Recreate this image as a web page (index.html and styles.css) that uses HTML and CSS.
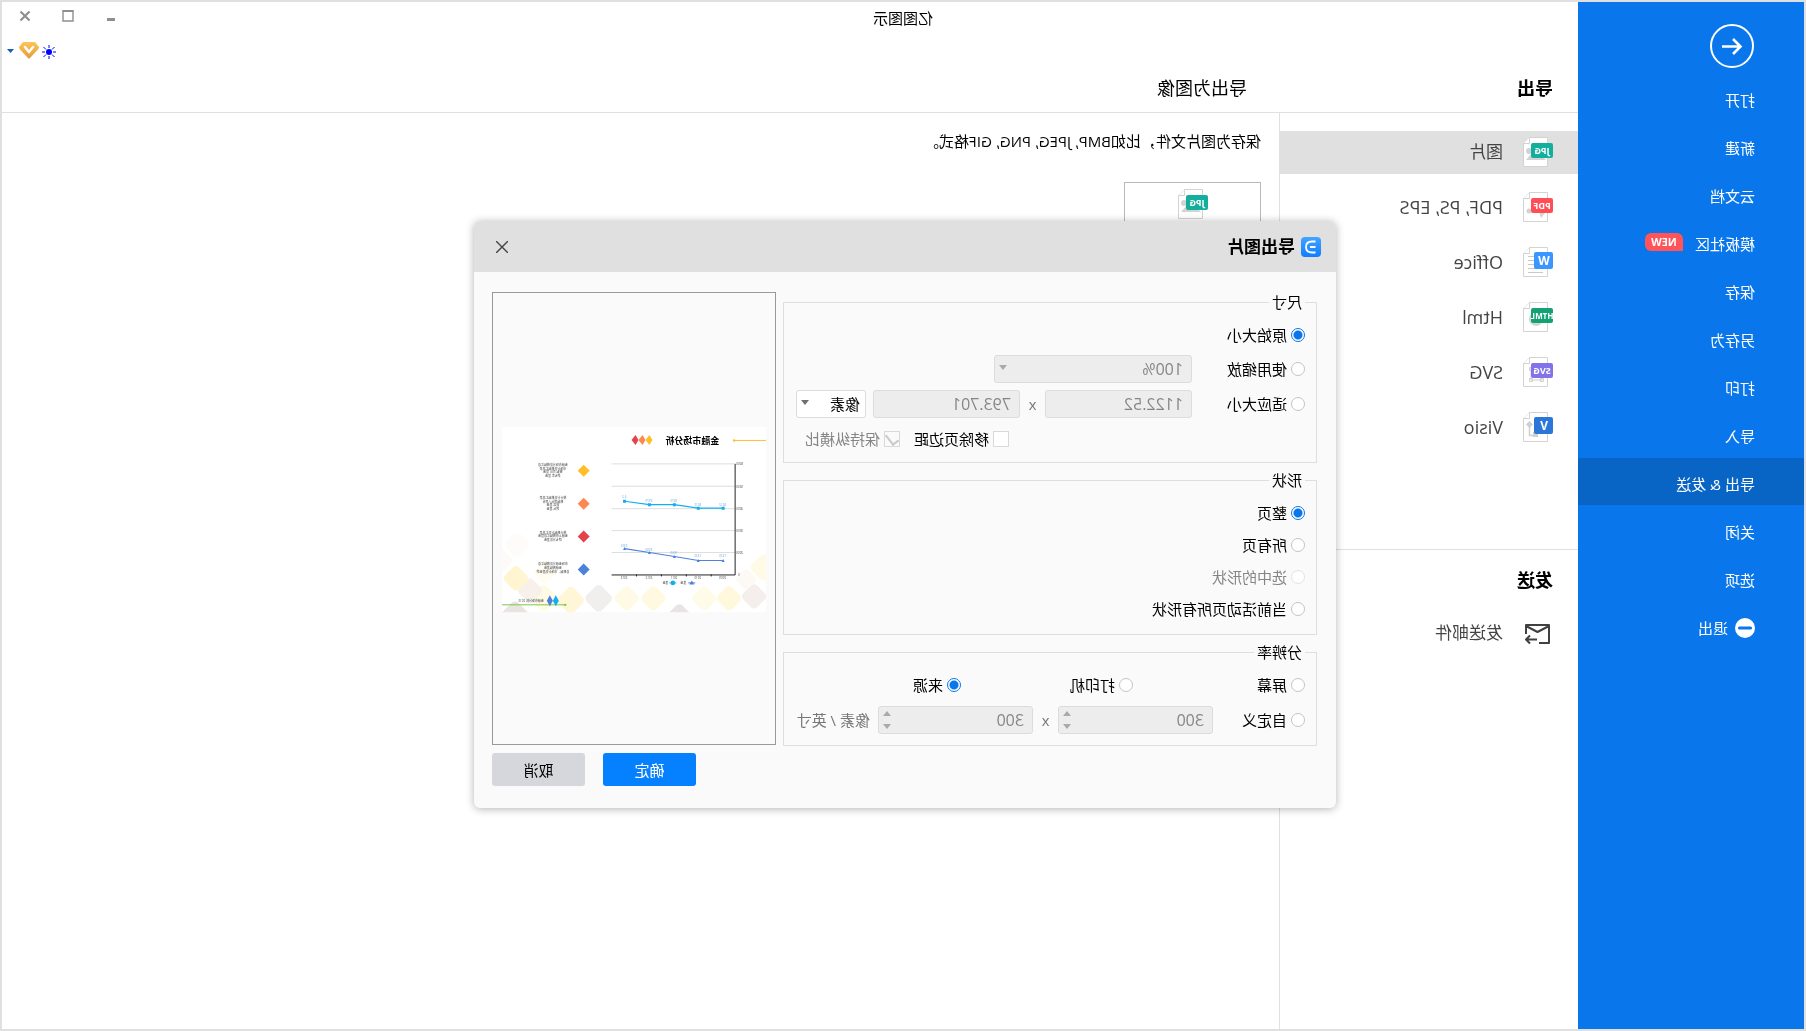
FILE: index.html
```html
<!DOCTYPE html>
<html lang="zh-CN">
<head>
<meta charset="utf-8">
<title>亿图图示</title>
<link rel="stylesheet" href="styles.css">
</head>
<body>
<svg class="defs" width="0" height="0" aria-hidden="true">
  <symbol id="page" viewBox="0 0 30 30"><path d="M5.500 0.500H23.500L29.500 6.500V29.500H5.500Z" fill="#fff" stroke="#d3d3d3"/><path d="M23.500 0.500V6.500H29.500" fill="#fff" stroke="#d3d3d3"/></symbol>
</svg>
<div class="window">
  <nav class="sidebar">
    <button class="back" aria-label="返回"><svg width="44" height="44" viewBox="0 0 44 44" fill="none" stroke="#fff"><circle cx="22" cy="22" r="21" stroke-width="2"/><path d="M32 22.500H14M21 15L13.500 22.500L21 30" stroke-width="2.600"/></svg></button>
    <ul class="menu">
      <li><a href="#">打开</a></li>
      <li><a href="#">新建</a></li>
      <li><a href="#">云文档</a></li>
      <li><a href="#">模板社区<span class="new">NEW</span></a></li>
      <li><a href="#">保存</a></li>
      <li><a href="#">另存为</a></li>
      <li><a href="#">打印</a></li>
      <li><a href="#">导入</a></li>
      <li><a href="#" class="active">导出 &amp; 发送</a></li>
      <li><a href="#">关闭</a></li>
      <li><a href="#">选项</a></li>
      <li><a href="#" class="exit"><svg width="20" height="20" viewBox="0 0 20 20"><circle cx="10" cy="10" r="10" fill="#fff"/><path d="M4.500 10H15.500" stroke="#0977eb" stroke-width="3.200" stroke-linecap="round"/></svg>退出</a></li>
    </ul>
  </nav>
  <div class="main">
    <header class="top">
      <div class="titlebar">
        <h1>亿图图示</h1>
        <div class="controls">
          <button aria-label="最小化"><svg width="12" height="12" viewBox="0 0 12 12"><path d="M2 9.500H10" stroke="#8f8f8f" stroke-width="3"/></svg></button>
          <button aria-label="最大化"><svg width="12" height="12" viewBox="0 0 12 12"><path d="M1 1H11V11H1Z" fill="none" stroke="#8f8f8f" stroke-width="1.400"/><path d="M0.500 1H11.500" stroke="#8f8f8f" stroke-width="2"/></svg></button>
          <button aria-label="关闭窗口"><svg width="12" height="12" viewBox="0 0 12 12"><path d="M1.500 1.500L10.500 10.500M10.500 1.500L1.500 10.500" stroke="#8f8f8f" stroke-width="2.200"/></svg></button>
        </div>
      </div>
      <div class="account">
        <svg class="sun" width="14" height="14" viewBox="0 0 14 14"><circle cx="7" cy="7" r="3" fill="#00f"/><path d="M7 0V3M7 11V14M0 7H3M11 7H14M1.500 2L4 4.500M10 9.500L12.500 12M1.500 12L4 9.500M10 4.500L12.500 2" stroke="#00f"/></svg>
        <svg width="20" height="17" viewBox="0 0 20 17"><defs><linearGradient id="gold" x2="0" y2="1"><stop stop-color="#ffc456"/><stop offset="1" stop-color="#e59b3c"/></linearGradient></defs><path d="M4 0H16L20 5Q20 6 19 7.500L11 16Q10 17 9 16L1 7.500Q0 6 0 5Z" fill="url(#gold)"/><path d="M6 5L10 10L14 5" fill="none" stroke="#fff" stroke-width="2.500" stroke-linecap="round" stroke-linejoin="round"/></svg>
        <svg class="caret" width="7" height="4" viewBox="0 0 7 4"><path d="M0 0H7L3.500 4Z" fill="#155fb8"/></svg>
      </div>
      <div class="headings"><h2>导出</h2><h3>导出为图像</h3></div>
    </header>
    <div class="columns">
      <aside class="panel">
        <ul class="formats">
          <li><a href="#" class="selected"><svg width="30" height="30" viewBox="0 0 30 30"><use href="#page"/><path d="M7 23L14 16L18 20L21 16L27 23Z" fill="#d3d3d3"/><circle cx="24" cy="14" r="3" fill="#d3d3d3"/><rect y="6" width="22" height="15" rx="2" fill="#14ae9d"/><text class="tag" x="11" y="17">JPG</text></svg>图片</a></li>
          <li><a href="#" class="latin"><svg width="30" height="30" viewBox="0 0 30 30"><use href="#page"/><circle cx="24" cy="19" r="2.500" fill="#d3d3d3"/><path d="M8 21L14 20L12 26Z" fill="#d3d3d3"/><rect y="6" width="22" height="15" rx="2" fill="#ff4e55"/><text class="tag" x="11" y="17">PDF</text></svg>PDF, PS, EPS</a></li>
          <li><a href="#" class="latin"><svg width="30" height="30" viewBox="0 0 30 30"><use href="#page"/><path d="M10 9.500H25M10 13.500H25M10 17.500H25M10 21.500H25M10 25.500H25" stroke="#c9c9c9"/><rect y="5" width="19" height="17" rx="2" fill="#3b97ff"/><text class="tag letter" x="9" y="18">W</text></svg>Office</a></li>
          <li><a href="#" class="latin"><svg width="30" height="30" viewBox="0 0 30 30"><use href="#page"/><circle cx="17" cy="17" r="7" fill="#d3d3d3"/><rect y="6" width="22" height="15" rx="2" fill="#13a273"/><text class="tag long" x="11" y="17">HTML</text></svg>Html</a></li>
          <li><a href="#" class="latin"><svg width="30" height="30" viewBox="0 0 30 30"><use href="#page"/><path d="M11 11H22V23H11Z M9.500 21.500h3v3h-3Z M20.500 21.500h3v3h-3Z M20.500 10.500h3v3h-3Z" fill="#fff" stroke="#d0d0d0"/><rect y="6" width="22" height="15" rx="2" fill="#8273e8"/><text class="tag" x="11" y="17">SVG</text></svg>SVG</a></li>
          <li><a href="#" class="latin"><svg width="30" height="30" viewBox="0 0 30 30"><use href="#page"/><path d="M23.500 9L27 12.500L23.500 16L20 12.500Z M15 20H20V25H15Z" fill="#d0d0d0"/><path d="M23.500 15V23.500H19" fill="none" stroke="#d0d0d0" stroke-width="1.500"/><rect y="5" width="19" height="17" rx="2" fill="#2b76d9"/><text class="tag letter" x="9" y="18">V</text></svg>Visio</a></li>
        </ul>
        <section class="send">
          <h2>发送</h2>
          <a href="#"><svg width="30" height="24" viewBox="0 0 30 24" fill="none" stroke="#404040" stroke-width="2"><path d="M14 22H4V4H27V13M4 5L15.500 11L27 5M16 18.500H27M23 14.500L27 18.500L23 22.500" stroke-linejoin="round"/></svg>发送邮件</a>
        </section>
      </aside>
      <main class="content">
        <p>保存为图片文件，比如BMP, JPEG, PNG, GIF格式。</p>
        <button class="card" aria-label="图片"><svg width="30" height="30" viewBox="0 0 30 30"><use href="#page"/><path d="M7 23L14 16L18 20L21 16L27 23Z" fill="#d3d3d3"/><circle cx="24" cy="14" r="3" fill="#d3d3d3"/><rect y="6" width="22" height="15" rx="2" fill="#14ae9d"/><text class="tag" x="11" y="17">JPG</text></svg></button>
      </main>
    </div>
  </div>

  <div class="overlay">
    <div class="dialog" role="dialog" aria-labelledby="dlg-title">
      <header class="dlg-head">
        <svg width="20" height="20" viewBox="0 0 20 20"><defs><linearGradient id="blue" x2="0" y2="1"><stop stop-color="#42a5ff"/><stop offset="1" stop-color="#117cff"/></linearGradient></defs><rect width="20" height="20" rx="4" fill="url(#blue)"/><path d="M5.500 4.500H9Q15 4.500 15 10T9 15.500H5.500M5.500 10H11" fill="none" stroke="#fff" stroke-width="1.800"/></svg>
        <h2 id="dlg-title">导出图片</h2>
        <button class="close" aria-label="关闭"><svg width="12" height="12" viewBox="0 0 12 12"><path d="M0 0L12 12M12 0L0 12" stroke="#444" stroke-width="1.400"/></svg></button>
      </header>
      <form class="dlg-body">
        <div class="options">
          <fieldset class="size">
            <legend>尺寸</legend>
            <div class="row"><label class="opt"><input type="radio" name="size" checked>原始大小</label></div>
            <div class="row fields"><label class="opt lead"><input type="radio" name="size">使用缩放</label>
              <span class="pick off zoom"><select disabled aria-label="缩放"><option>100%</option></select></span></div>
            <div class="row fields tall"><label class="opt lead"><input type="radio" name="size">适应大小</label>
              <input class="num" type="text" value="1122.52" disabled aria-label="宽"><span class="by">x</span><input class="num" type="text" value="793.701" disabled aria-label="高">
              <span class="pick unit"><select aria-label="单位"><option>像素</option></select></span></div>
            <div class="row checks"><label class="opt"><input type="checkbox">移除页边距</label><label class="opt off"><input type="checkbox" checked disabled>保持纵横比</label></div>
          </fieldset>
          <fieldset class="shape">
            <legend>形状</legend>
            <label class="opt"><input type="radio" name="shape" checked>整页</label>
            <label class="opt"><input type="radio" name="shape">所有页</label>
            <label class="opt off"><input type="radio" name="shape" disabled>选中的形状</label>
            <label class="opt"><input type="radio" name="shape">当前活动页所有形状</label>
          </fieldset>
          <fieldset class="dpi">
            <legend>分辨率</legend>
            <div class="row thirds"><label class="opt"><input type="radio" name="dpi">屏幕</label><label class="opt"><input type="radio" name="dpi">打印机</label><label class="opt"><input type="radio" name="dpi" checked>来源</label></div>
            <div class="row fields"><label class="opt custom"><input type="radio" name="dpi">自定义</label>
              <span class="spin"><input class="num" type="text" value="300" disabled aria-label="水平分辨率"></span><span class="by">x</span><span class="spin"><input class="num" type="text" value="300" disabled aria-label="垂直分辨率"></span><span class="units">像素 / 英寸</span></div>
          </fieldset>
        </div>
        <div class="side">
          <div class="preview">
            <svg viewBox="0 0 265 186" role="img" aria-label="预览">
              <defs><clipPath id="sheet"><path d="M0 0H265V186H0Z"/></clipPath></defs>
              <path d="M0 0H265V186H0Z" fill="#fff"/>
              <g clip-path="url(#sheet)" class="tiles">
                <rect x="-9" y="-9" width="18" height="18" rx="4" transform="translate(12 170) rotate(45) scale(1.100)" fill="#f4efec"/>
                <rect x="-9" y="-9" width="18" height="18" rx="4" transform="translate(37 172) rotate(45) scale(1.100)" fill="#fff8dc"/>
                <rect x="-9" y="-9" width="18" height="18" rx="4" transform="translate(62 172) rotate(45) scale(1.100)" fill="#fffbe9"/>
                <rect x="-9" y="-9" width="18" height="18" rx="4" transform="translate(87 190) rotate(45) scale(1.100)" fill="#e9e4e4"/>
                <rect x="-9" y="-9" width="18" height="18" rx="4" transform="translate(113 172) rotate(45) scale(1.100)" fill="#fff9e2"/>
                <rect x="-9" y="-9" width="18" height="18" rx="4" transform="translate(140 172) rotate(45) scale(1.100)" fill="#fffae6"/>
                <rect x="-9" y="-9" width="18" height="18" rx="4" transform="translate(168 172) rotate(45) scale(1.200)" fill="#f1eeee"/>
                <rect x="-9" y="-9" width="18" height="18" rx="4" transform="translate(196 174) rotate(45) scale(1.200)" fill="#fff6d8"/>
                <rect x="-9" y="-9" width="18" height="18" rx="4" transform="translate(223 172) rotate(45) scale(1.200)" fill="#fffae6"/>
                <rect x="-9" y="-9" width="18" height="18" rx="4" transform="translate(252 189) rotate(45) scale(1.250)" fill="#e9e3e1"/>
                <rect x="-9" y="-9" width="18" height="18" rx="4" transform="translate(237 164) rotate(45) scale(1.100)" fill="#f8f1eb"/>
                <rect x="-9" y="-9" width="18" height="18" rx="4" transform="translate(251 152) rotate(45) scale(1.100)" fill="#fff5d0"/>
                <rect x="-9" y="-9" width="18" height="18" rx="4" transform="translate(222 146) rotate(45)" fill="#fffcf2"/>
                <rect x="-9" y="-9" width="18" height="18" rx="4" transform="translate(250 118) rotate(45) scale(1.100)" fill="#fefcfa"/>
                <rect x="-9" y="-9" width="18" height="18" rx="4" transform="translate(267 134) rotate(45) scale(1.100)" fill="#fdfaf7"/>
                <rect x="-9" y="-9" width="18" height="18" rx="4" transform="translate(2 141) rotate(45) scale(1.200)" fill="#fffae6"/>
                <rect x="-9" y="-9" width="18" height="18" rx="4" transform="translate(20 153) rotate(45) scale(.9)" fill="#fdfaf5"/>
              </g>
              <path d="M0 13.500H32" stroke="#ffc02e"/><circle cx="32" cy="13.500" r="1.200" fill="#ffc02e"/>
              <text class="slide-title" x="47" y="17">金融市场分析</text>
              <path d="M117 8L121 13L117 18L114 13Z" fill="#ffbd26"/><path d="M124 8L128 13L124 18L121 13Z" fill="#fd8850"/><path d="M131 8L135 13L131 18L128 13Z" fill="#e2444a"/>
              <path d="M31 37H155M31 59.500H155M31 82H155M31 104H155M31 126H155" stroke="#dedede"/>
              <path d="M31 37V148.500H155M55 148V150M80 148V150M105 148V150M130 148V150" fill="none" stroke="#222"/>
              <path d="M43 81.500H68L92 78H117L142 74.500" fill="none" stroke="#12aff0" stroke-width="1.200"/>
              <path d="M41.500 80h3v3h-3Z M66.500 80h3v3h-3Z M90.500 76.500h3v3h-3Z M115.500 76.500h3v3h-3Z M140.500 73h3v3h-3Z" fill="#12aff0"/>
              <path d="M43 134H68L92 130L117 126L142 122" fill="none" stroke="#4d82da" stroke-width="1.200"/>
              <path d="M41.500 135.500l1.500-3 1.500 3Z M66.500 135.500l1.500-3 1.500 3Z M90.500 131.500l1.500-3 1.500 3Z M115.500 127.500l1.500-3 1.500 3Z M140.500 123.500l1.500-3 1.500 3Z" fill="#4d82da"/>
              <g class="tiny"><text x="23" y="38">6000</text><text x="23" y="61">5000</text><text x="23" y="83">4000</text><text x="23" y="105">3000</text><text x="23" y="127">2000</text><text x="26" y="150">0</text>
              <text x="40" y="153">2009</text><text x="65" y="153">2010</text><text x="89" y="153">2011</text><text x="114" y="153">2012</text><text x="139" y="153">2013</text><text x="80" y="158">基金</text><text x="98" y="158">基金</text></g>
              <g class="tiny pale"><text x="40" y="79">3612</text><text x="65" y="79">3612</text><text x="89" y="75">3970</text><text x="114" y="75">3970</text><text x="140" y="71">4.2</text><text x="40" y="131">1320</text><text x="65" y="131">1320</text><text x="89" y="127">1650</text><text x="114" y="124">2000</text><text x="139" y="120">2310</text></g>
              <path d="M71 156.500H78" stroke="#4d82da"/><path d="M72 158l2.500-4 2.500 4Z" fill="#4d82da"/><path d="M90 156.500H97" stroke="#12aff0"/><circle cx="93.500" cy="156.500" r="2.300" fill="#12aff0"/>
              <path d="M183 38L189 44L183 50L177 44Z" fill="#ffbd26"/><path d="M183 71L189 77L183 83L177 77Z" fill="#fd8850"/><path d="M183 104L189 110L183 116L177 110Z" fill="#e2444a"/><path d="M183 137L189 143L183 149L177 143Z" fill="#4d82da"/>
              <g class="tiny note">
                <text x="214" y="39">金融市场分析数据汇总</text><text x="214" y="43">市场分析数据汇总表</text><text x="214" y="46">数据 对比 基金</text><text x="214" y="50">增长率 基金</text>
                <text x="214" y="72">统计分析数据汇总表</text><text x="214" y="76">数据增长人民币</text><text x="214" y="79">收益 基金</text><text x="214" y="83">增长 基金</text>
                <text x="214" y="107">统计数据分析汇总表</text><text x="214" y="110">金融上市数据汇总基金</text><text x="214" y="114">增长分析基金</text>
                <text x="214" y="139">市场金融分析数据汇总</text><text x="214" y="143">金融数据基金</text><text x="214" y="147">总数据、市场分析基金增</text>
              </g>
              <path d="M201 178.500H265" stroke="#7ac943"/><circle cx="201.500" cy="178.500" r="1.200" fill="#7ac943"/>
              <path d="M211 169L214 174.500L211 180L208 174.500Z" fill="#12aff0"/><path d="M217 169L220 174.500L217 180L214 174.500Z" fill="#4d82da"/>
              <text class="tiny" x="223" y="176">金融市场分析 2013</text>
            </svg>
          </div>
          <div class="actions"><button type="button" class="ok">确定</button><button type="button" class="cancel">取消</button></div>
        </div>
      </form>
    </div>
  </div>
</div>
</body>
</html>
```
FILE: styles.css
```css
* { box-sizing: border-box; }
body {
  margin: 0;
  font: 15px/20px "Open Sans", "Noto Sans CJK SC", sans-serif;
  color: #000;
  background: #fff;
  /* the whole interface runs as a mirror image */
  transform: scaleX(-1);
}
ul, p, h1, h2, h3 { margin: 0; padding: 0; list-style: none; font-weight: 400; font-size: 15px; }
a { color: inherit; text-decoration: none; }
button { font: inherit; padding: 0; border: 0; background: none; }
svg { display: block; flex: none; }
.defs { position: absolute; }
.tag { font: bold 9px "Open Sans", sans-serif; fill: #fff; text-anchor: middle; }
.letter { font-size: 12px; }
.long { font-size: 8px; }

.window {
  position: relative;
  display: flex;
  min-height: 100vh;
  border: 2px solid #e0e0e0;
}
.sidebar { flex: none; width: 226px; padding-top: 22px; background: #0977eb; color: #fff; }
.back { display: block; margin-left: 50px; }
.menu { margin-top: 6px; }
.menu li { padding-bottom: 1px; }
.menu a { display: flex; align-items: center; height: 47px; padding: 4px 0 0 49px; }
.menu .active { background: #0865c5; }
.menu .exit { gap: 7px; }
.new {
  width: 38px;
  margin: -3px 0 0 12px;
  border-radius: 6px 6px 6px 0;
  background: #ff545a;
  font-size: 11px;
  font-weight: 700;
  line-height: 18px;
  text-align: center;
}

.main { flex: 1; display: flex; flex-direction: column; min-width: 0; }
.top { display: flex; flex-direction: column; height: 111px; border-bottom: 1px solid #e0e0e0; }
.titlebar { display: flex; align-items: center; height: 28px; }
.titlebar h1 { flex: 1; text-align: center; padding: 4px 232px 0 0; }
.controls { display: flex; gap: 31px; padding-right: 17px; margin-left: -121px; }
.account { display: flex; justify-content: flex-end; align-items: center; height: 40px; padding-right: 5px; }
.account .sun { margin-top: 4px; margin-right: 3px; }
.account .caret { margin-left: 5px; margin-top: 2px; }
.headings { display: flex; margin-top: 6px; padding-left: 25px; line-height: 24px; }
.headings h2, .send h2 { font-size: 18px; font-weight: 700; }
.headings h2 { width: 306px; }
.headings h3 { font-size: 18px; }

.columns { flex: 1; display: flex; }
.panel { flex: none; width: 299px; padding-top: 18px; border-right: 1px solid #e0e0e0; }
.formats { display: grid; gap: 12px; }
.formats a, .send a { display: flex; align-items: center; gap: 20px; height: 43px; padding: 0 0 2px 25px; font-size: 17px; color: #444; }
.formats .latin { font-size: 18px; }
.formats .selected { background: #e0e0e0; }
.send { margin-top: 100px; padding-top: 18px; border-top: 1px solid #e0e0e0; }
.send h2 { padding-left: 25px; line-height: 24px; }
.send a { margin-top: 20px; }
.content { flex: 1; padding: 18px; }
.card { display: block; width: 137px; height: 120px; margin-top: 31px; padding: 5px 52px; border: 1px solid #b9b9b9; }
.card svg { margin-bottom: 76px; }

.overlay { position: absolute; inset: 0; display: flex; justify-content: center; align-items: flex-start; padding: 219px 4px 0 0; }
.dialog { width: 862px; border-radius: 6px; background: #fafafa; box-shadow: 0 1px 9px rgba(0, 0, 0, .3); }
.dlg-head { display: flex; align-items: center; gap: 6px; height: 51px; padding: 0 22px 0 15px; border-radius: 6px 6px 0 0; background: #e0e0e0; }
.dlg-head h2 { flex: 1; font-size: 17px; font-weight: 700; }
.dlg-body { display: flex; gap: 7px; padding: 20px 18px 22px 19px; }
.options { flex: 1; display: flex; flex-direction: column; gap: 7px; }
fieldset { margin: 0; padding: 0 11px; border: 1px solid #dedede; min-width: 0; }
legend { padding: 0 3px; line-height: 20px; }
.row { display: flex; align-items: center; }
.opt { display: flex; align-items: center; gap: 4px; height: 20px; white-space: nowrap; }
.opt.off { color: #858585; }
.opt input { appearance: none; flex: none; width: 14px; height: 14px; margin: 0; border: 1px solid #c4c4c4; border-radius: 50%; background: #fff; }
.opt input:checked { border-color: #0977eb; background: radial-gradient(circle, #0977eb 4px, #fff 5px); }
.opt input:disabled { border-color: #e2e2e2; }
.opt input[type="checkbox"] { width: 16px; height: 16px; border-radius: 0; border-color: #d9d9d9; }
.opt input[type="checkbox"]:checked { display: grid; place-items: center; background: #fafafa; }
.opt input[type="checkbox"]:checked::before { content: ""; width: 6px; height: 11px; border: solid #c9c9c9; border-width: 0 2px 2px 0; transform: translateY(-1px) rotate(38deg); }
.size { height: 171px; }
.size .row:first-of-type { height: 43px; padding-top: 3px; }
.fields { height: 28px; }
.tall { margin-top: 7px; }
.lead { width: 113px; }
.num, select {
  width: 147px;
  height: 28px;
  padding: 0 8px;
  border: 1px solid #dcdcdc;
  border-radius: 3px;
  background: #ededed;
  color: #858585;
  font: inherit;
}
.num, .zoom select { font-size: 16px; }
select { appearance: none; width: 100%; display: block; opacity: 1; }
.pick { position: relative; }
.pick::after { content: ""; position: absolute; right: 5px; top: 10px; border: solid transparent; border-width: 5px 4px 0; border-top-color: #6f6f6f; }
.pick.off::after { border-top-color: #aaa; }
.zoom { width: 198px; }
.unit { width: 70px; margin-left: 7px; }
.unit select { padding-left: 5px; background: #fff; color: #000; }
.by { width: 25px; text-align: center; color: #777; }
.checks { gap: 14px; margin-top: 11px; padding-left: 296px; }
.shape { display: grid; align-content: start; gap: 12px; height: 165px; }
.shape .opt:first-of-type { margin-top: 13px; }
.dpi { height: 104px; }
.thirds { display: grid; grid-template-columns: 172px 172px 1fr; height: 44px; padding-top: 2px; }
.custom { width: 92px; }
.spin { position: relative; }
.spin .num { display: block; width: 155px; }
.spin::before, .spin::after { content: ""; position: absolute; right: 5px; border: solid transparent; }
.spin::before { top: 5px; border-width: 0 4px 5px; border-bottom-color: #aaa; }
.spin::after { bottom: 5px; border-width: 5px 4px 0; border-top-color: #aaa; }
.units { margin-left: 8px; color: #777; white-space: nowrap; }

.side { width: 284px; }
.preview { display: grid; align-items: center; height: 453px; padding: 3px 9px 0; border: 1px solid #999; }
.preview svg { width: 100%; }
.slide-title { font-size: 9px; font-weight: 700; }
.tiny { font-size: 3px; fill: #444; }
.pale { fill: #6aa5e0; }
.note { text-anchor: middle; }
.actions { display: flex; justify-content: flex-end; gap: 18px; margin-top: 8px; }
.actions button { width: 93px; height: 33px; border-radius: 3px; }
.ok { background: #0580ff; color: #fff; }
.cancel { background: #d5d7dc; }
```
